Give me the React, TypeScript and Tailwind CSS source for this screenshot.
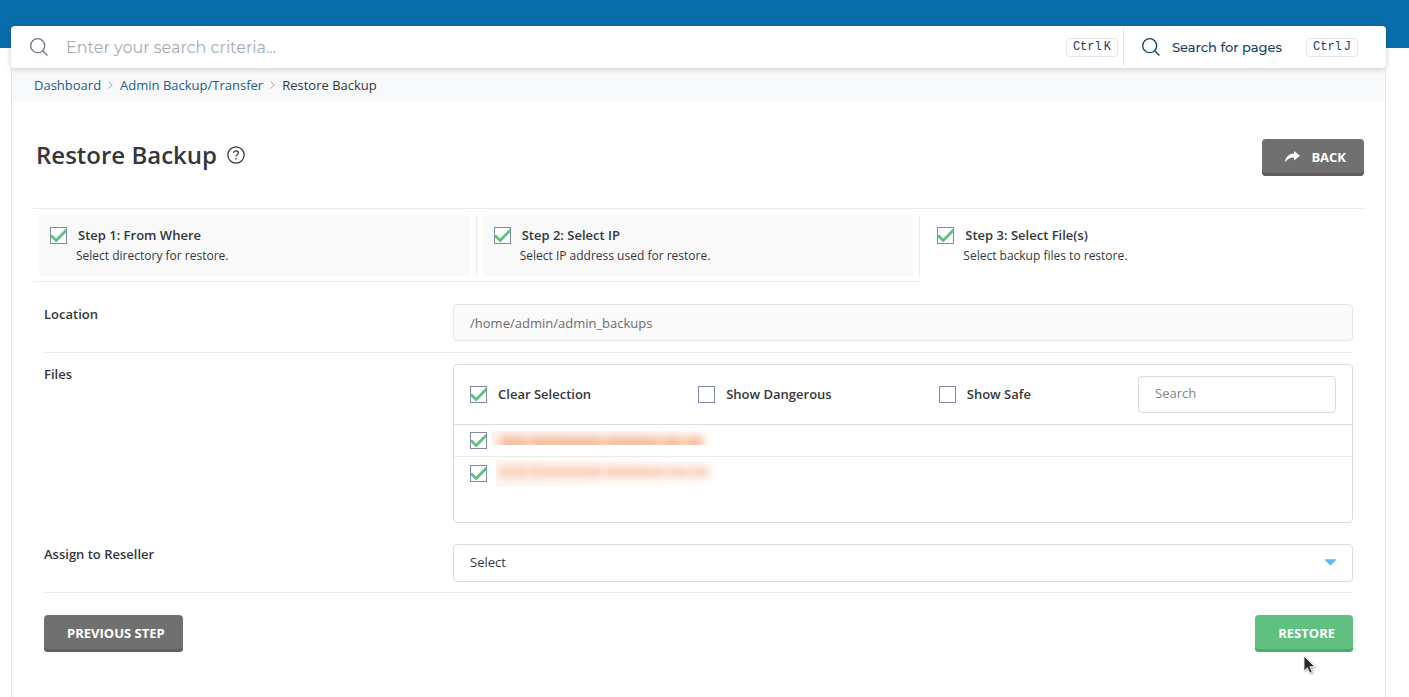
import { useState } from "react";

type CheckProps = {
  label: string;
  checked: boolean;
  onChange: () => void;
};

function CheckBox({ label, checked, onChange }: CheckProps) {
  return (
    <span className="relative block size-[17px] shrink-0">
      <input
        type="checkbox"
        aria-label={label}
        checked={checked}
        onChange={onChange}
        className="peer block size-[17px] appearance-none border border-[#7f89a1] bg-white"
      />
      <svg className="pointer-events-none absolute inset-0 hidden size-[17px] peer-checked:block" viewBox="0 0 17 17" fill="none">
        <path d="M1 8.500l5.200 5L16.500 3" stroke="#5ec183" strokeWidth="2.8" />
      </svg>
    </span>
  );
}

function Check(props: CheckProps) {
  return (
    <label className="flex items-center gap-[11px] font-semibold">
      <CheckBox {...props} />
      <span>{props.label}</span>
    </label>
  );
}

function SearchIcon() {
  return (
    <svg className="size-[18px] shrink-0" viewBox="0 0 18 18" fill="none" stroke="currentColor" strokeWidth="1.3">
      <circle cx="7.7" cy="7.7" r="7" />
      <path d="M12.7 12.7l4.8 4.8" />
    </svg>
  );
}

function Kbd({ letter }: { letter: string }) {
  return (
    <kbd className="flex h-[19px] items-center gap-[2px] rounded border border-[#e1e4e8] px-[6px] font-['Liberation_Mono',monospace] text-xs text-[#16405f]">
      <span>Ctrl</span>
      <span>{letter}</span>
    </kbd>
  );
}

function Crumb() {
  return (
    <svg className="mx-[7px] h-2 w-[5px]" viewBox="0 0 5 8" fill="none">
      <path d="M.7.5L4.200 4 .7 7.500" stroke="#9aa1ab" />
    </svg>
  );
}

const steps = [
  { title: "Step 1: From Where", text: "Select directory for restore." },
  { title: "Step 2: Select IP", text: "Select IP address used for restore." },
  { title: "Step 3: Select File(s)", text: "Select backup files to restore." },
];

const grayButton =
  "flex h-[37px] items-center rounded bg-[#6f706f] pr-[18px] pb-[2px] pl-[23px] text-[13px] font-bold text-white uppercase shadow-[inset_0_-3px_0_#5e5f5e]";

export default function App() {
  const [files, setFiles] = useState([true, true]);
  const [dangerous, setDangerous] = useState(false);
  const [safe, setSafe] = useState(false);
  const all = files.every(Boolean);

  const toggleFile = (i: number) => setFiles(files.map((f, n) => (n === i ? !f : f)));

  return (
    <div className="flex min-h-screen flex-col bg-white font-['Open_Sans',sans-serif] text-[13px] leading-5 text-[#33373b]">
      <header className="h-12 bg-[#0a6dab]" />

      <main className="-mt-[22px] mr-[23px] ml-[11px] flex flex-1 flex-col">
        {/* search bar */}
        <div className="relative flex h-[42px] items-center rounded bg-white font-['Montserrat','Inter',sans-serif] shadow-[0_1px_6px_rgba(0,0,0,0.2)]">
          <label htmlFor="criteria" className="ml-[19px] text-[#6d7585]">
            <SearchIcon />
          </label>
          <input
            id="criteria"
            placeholder="Enter your search criteria..."
            className="ml-[18px] min-w-0 flex-1 pt-[2px] text-base outline-none placeholder:text-[#a5abb5]"
          />
          <Kbd letter="K" />
          <button type="button" className="ml-[5px] flex h-[38px] items-center border-l border-[#e1e4e8] pr-7 pl-[18px] text-[#16405f]">
            <SearchIcon />
            <span className="mr-6 ml-3 text-[13px] font-medium">Search for pages</span>
            <Kbd letter="J" />
          </button>
        </div>

        <div className="flex-1 border-x border-[#e4e6e9]">
          <nav className="flex h-[33px] items-center bg-[#f8f9fb] px-[22px]">
            <a href="#dashboard" className="text-[#215e8a]">Dashboard</a>
            <Crumb />
            <a href="#backup" className="text-[#215e8a]">Admin Backup/Transfer</a>
            <Crumb />
            <span>Restore Backup</span>
          </nav>

          <div className="px-[21px] pt-[38px]">
            <div className="mb-8 flex items-center justify-between pl-[3px]">
              <div className="flex items-center gap-[10px] pb-[5px]">
                <h1 className="text-2xl leading-8 font-semibold">Restore Backup</h1>
                <svg className="size-[18px]" viewBox="0 0 18 18" fill="none" stroke="#33373b" strokeWidth="1.2">
                  <circle cx="9" cy="9" r="8.2" />
                  <path d="M6.600 7.100c0-1.400 1-2.300 2.400-2.300s2.400.9 2.400 2.100c0 1.700-2.400 1.800-2.400 3.700" />
                  <circle cx="9" cy="12.8" r=".5" fill="#33373b" strokeWidth=".6" />
                </svg>
              </div>
              <button type="button" className={grayButton}>
                <svg className="mr-[11px] h-3 w-[15px]" viewBox="0 0 15 12" fill="#fff">
                  <path d="M9 0l6 4.800-6 4.600V6.600C5 6.500 2.200 8 .3 11.600 0 6.800 3.500 2.800 9 2.600z" />
                </svg>
                Back
              </button>
            </div>

            {/* wizard steps */}
            <ol className="grid grid-cols-3 border-t border-[#ebebeb]">
              {steps.map((s, i) => (
                <li key={s.title} className={i < 2 ? "border-b border-[#ebebeb] pt-[6px] pb-[5px]" : "pt-[6px] pb-[5px]"}>
                  <div className={i < 2 ? "border-r border-[#ebebeb] px-[6px]" : "px-[6px]"}>
                    <div className={i < 2 ? "h-[61px] bg-[#f9f9f9] px-[11px] pt-[10px]" : "h-[61px] px-[11px] pt-[10px]"}>
                      <Check label={s.title} checked onChange={() => {}} />
                      <p className="pl-[26px] text-xs leading-[22px]">{s.text}</p>
                    </div>
                  </div>
                </li>
              ))}
            </ol>

            <form className="px-[11px] pt-[22px]" onSubmit={(e) => e.preventDefault()}>
              <div className="grid grid-cols-[5fr_11fr] border-b border-[#ebebeb] pb-[11px]">
                <label htmlFor="location" className="font-semibold">Location</label>
                <input
                  id="location"
                  disabled
                  defaultValue="/home/admin/admin_backups"
                  className="h-[37px] rounded border border-[#e4e4e4] bg-[#fafafa] px-4 text-[#6c6c6c]"
                />
              </div>

              <div className="grid grid-cols-[5fr_11fr] pt-[11px]">
                <span className="font-semibold">Files</span>
                <div className="h-[159px] rounded border border-[#dcdcdc]">
                  <div className="flex h-[60px] items-center justify-between border-b border-[#dcdcdc] px-4 pb-px">
                    <Check label="Clear Selection" checked={all} onChange={() => setFiles([!all, !all])} />
                    <Check label="Show Dangerous" checked={dangerous} onChange={() => setDangerous(!dangerous)} />
                    <Check label="Show Safe" checked={safe} onChange={() => setSafe(!safe)} />
                    <input
                      aria-label="Search"
                      placeholder="Search"
                      className="h-[37px] w-[198px] rounded border border-[#dcdcdc] px-4 pb-[2px] placeholder:text-[#858585]"
                    />
                  </div>
                  <div className="flex h-8 items-center gap-1 border-b border-[#ebebeb] px-4">
                    <CheckBox label="File 1" checked={files[0]} onChange={() => toggleFile(0)} />
                    {/* redacted file names */}
                    <div aria-hidden="true" className="mb-[6px] h-[14px] w-[230px] overflow-hidden bg-linear-to-r from-[#fef6f2] to-white">
                      <div className="mt-[5px] ml-2 flex h-[14px] gap-[2px] blur-[4px]">
                        <i className="w-[28px] bg-[#f6bd9d]" />
                        <i className="w-[74px] bg-[#f6bd9d]" />
                        <i className="w-[55px] bg-[#f6bd9d]" />
                        <i className="w-[21px] bg-[#f6bd9d]" />
                        <i className="w-[18px] bg-[#f6bd9d]" />
                      </div>
                    </div>
                  </div>
                  <div className="flex h-8 items-center gap-[9px] px-4">
                    <CheckBox label="File 2" checked={files[1]} onChange={() => toggleFile(1)} />
                    <div aria-hidden="true" className="h-[26px] w-[225px] overflow-hidden bg-linear-to-r from-[#fef5f0] to-white">
                      <div className="mt-[7px] ml-[3px] flex h-[10px] gap-[2px] blur-[4px]">
                        <i className="w-[28px] bg-[#f8cdb4]" />
                        <i className="w-[74px] bg-[#f8cdb4]" />
                        <i className="w-[60px] bg-[#f8cdb4]" />
                        <i className="w-[22px] bg-[#f8cdb4]" />
                        <i className="w-[18px] bg-[#f8cdb4]" />
                      </div>
                    </div>
                  </div>
                </div>
              </div>

              <div className="mt-[21px] grid grid-cols-[5fr_11fr] border-b border-[#ebebeb] pb-[10px]">
                <label htmlFor="reseller" className="font-semibold">Assign to Reseller</label>
                <div className="relative">
                  <select
                    id="reseller"
                    className="block h-[38px] w-full appearance-none rounded border border-[#dcdcdc] bg-white px-4 pb-[2px]"
                  >
                    <option>Select</option>
                  </select>
                  <svg className="pointer-events-none absolute top-[15px] right-4 h-[7px] w-[13px]" viewBox="0 0 13 7" fill="#5db9f5">
                    <path d="M1 .3h11v.9L6.500 6.600 1 1.200z" />
                  </svg>
                </div>
              </div>

              <div className="flex justify-between pt-[22px]">
                <button type="button" className={grayButton}>Previous Step</button>
                <div className="relative">
                  <button
                    type="submit"
                    className="flex h-[37px] items-center rounded bg-[#60c080] pr-[18px] pb-[2px] pl-[23px] text-[13px] font-bold text-white uppercase shadow-[inset_0_-3px_0_#48b06b]"
                  >
                    Restore
                  </button>
                  <svg
                    className="absolute top-10 left-12 h-5 w-[14px] drop-shadow-[1px_1px_1px_rgba(0,0,0,0.35)]"
                    viewBox="0 0 14 20"
                    fill="#2b2b2b"
                    stroke="#fff"
                    strokeWidth=".8"
                  >
                    <path d="M1 1v15l3.400-3.200 2.400 5.200 2.400-1.100-2.300-5.100 4.600-.3z" />
                  </svg>
                </div>
              </div>
            </form>
          </div>
        </div>
      </main>
    </div>
  );
}
